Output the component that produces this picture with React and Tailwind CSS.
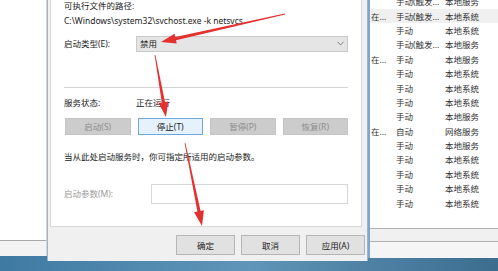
const FONT = "font-['Noto_Sans','Noto_Sans_CJK_SC',sans-serif]";

const ROWS = [
  ["", "手动(触发...", "本地服务"],
  ["在...", "手动(触发...", "本地系统", true],
  ["", "手动", "本地系统"],
  ["", "手动(触发...", "本地服务"],
  ["在...", "手动", "本地服务"],
  ["", "手动", "本地系统"],
  ["", "手动", "本地系统"],
  ["", "手动", "本地系统"],
  ["", "手动", "本地服务"],
  ["在...", "自动", "网络服务"],
  ["", "手动", "本地服务"],
  ["", "手动", "本地系统"],
  ["", "手动", "本地系统"],
  ["", "手动", "本地系统"],
  ["", "手动", "本地系统"],
];

function arrowPoints([tx, ty], [px, py]) {
  const len = Math.hypot(px - tx, py - ty);
  const dx = (px - tx) / len;
  const dy = (py - ty) / len;
  const nx = -dy;
  const ny = dx;
  const L = 15;
  const bx = px - dx * L;
  const by = py - dy * L;
  const pts = [
    [tx + nx * 0.4, ty + ny * 0.4],
    [bx + nx * 1.6, by + ny * 1.6],
    [bx + nx * 5, by + ny * 5],
    [px, py],
    [bx - nx * 5, by - ny * 5],
    [bx - nx * 1.6, by - ny * 1.6],
    [tx - nx * 0.4, ty - ny * 0.4],
  ];
  return pts.map((p) => p.map((v) => v.toFixed(1)).join(",")).join(" ");
}

function ActionButton({ label, active }) {
  return (
    <div
      className={`flex h-[17px] w-[66px] items-center justify-center border ${
        active ? "border-[#6fa8dc] bg-[#e5f1fb] text-[#222]" : "border-[#c4c4c4] bg-[#cccccc] text-[#8c8c8c]"
      }`}
    >
      {label}
    </div>
  );
}

function FooterButton({ label }) {
  return (
    <div className="flex h-[20px] w-[59px] items-center justify-center border border-[#b5b5b5] bg-[#e1e1e1] text-[#222]">
      {label}
    </div>
  );
}

export default function App() {
  return (
    <div className={`relative h-[271px] w-[498px] overflow-hidden bg-gradient-to-r from-[#3f7aa3] via-[#5f95b8] to-[#3c6d8f] text-[8.5px] leading-[11px] ${FONT}`}>
      <div className="flex h-[258px]">
        {/* background window, left */}
        <div className="flex h-[256px] w-[47px] flex-col border-r border-[#d6d6d6] bg-white">
          <div className="flex-1" />
          <div className="h-[16px] border-t border-[#a9a9a9] bg-[#f3f3f3]" />
        </div>

        {/* properties dialog */}
        <div className="flex h-[261px] w-[321px] flex-col border-x border-[#9fb3c6] bg-[#f0f0f0] pl-[2px] pr-[5px]">
          <div className="flex h-[227px] flex-col border-x border-b border-[#d9d9d9] bg-white pl-[13px] pr-[13px] text-[#222]">
            <div className="-mt-[0.5px]">可执行文件的路径:</div>
            <div className="mt-[4px]">C:\Windows\system32\svchost.exe -k netsvcs</div>

            <div className="mt-[10px] flex h-[16px] items-center">
              <div className="w-[72px]">启动类型(E):</div>
              <div className="flex h-[16px] flex-1 items-center justify-between border border-[#c9c9c9] bg-[#e5e5e5] pl-[3px] pr-[3px]">
                <span>禁用</span>
                <svg width="7" height="5" viewBox="0 0 7 5" fill="none" stroke="#777" strokeWidth="0.9">
                  <path d="M0.5 0.8 L3.5 4 L6.5 0.8" />
                </svg>
              </div>
            </div>

            <div className="mt-[35px] h-px bg-[#d4d4d4]" />

            <div className="mt-[9.5px] flex">
              <div className="w-[72px]">服务状态:</div>
              <div>正在运行</div>
            </div>

            <div className="mt-[9.5px] flex gap-[7px] pl-[1px]">
              <ActionButton label="启动(S)" />
              <ActionButton label="停止(T)" active />
              <ActionButton label="暂停(P)" />
              <ActionButton label="恢复(R)" />
            </div>

            <div className="mt-[16.5px]">当从此处启动服务时，你可指定所适用的启动参数。</div>

            <div className="mt-[21.5px] flex h-[20px] items-center">
              <div className="w-[87px] text-[#9a9a9a]">启动参数(M):</div>
              <div className="h-[20px] flex-1 border border-[#d6d6d6] bg-white" />
            </div>
          </div>

          <div className="mt-[8px] flex justify-end gap-[6px] pr-0">
            <FooterButton label="确定" />
            <FooterButton label="取消" />
            <div className="-mr-[3px]">
              <FooterButton label="应用(A)" />
            </div>
          </div>
        </div>

        {/* services list, right */}
        <div className="flex h-[258px] flex-1 flex-col border-l-2 border-[#7ea7cf] bg-white text-[#333]">
          <div className="h-[228px] overflow-hidden">
            <div className="-mt-[5.5px]">
              {ROWS.map(([state, type, account, sel], i) => (
                <div key={i} className={`flex h-[14.4px] items-center pl-[1px] ${sel ? "bg-[#f0f0f0]" : ""}`}>
                  <div className="w-[25px]">{state}</div>
                  <div className="w-[49px]">{type}</div>
                  <div>{account}</div>
                </div>
              ))}
            </div>
          </div>
          <div className="h-[14px] border-y border-[#b0b0b0] bg-[#f0f0f0]" />
          <div className="flex-1 bg-[#f5f5f5]" />
        </div>
      </div>

      {/* red annotation arrows */}
      <svg className="pointer-events-none absolute left-0 top-0" width="498" height="271">
        <polygon points={arrowPoints([285, 14], [161, 42])} fill="#e53030" />
        <polygon points={arrowPoints([155, 55], [166, 117])} fill="#e53030" />
        <polygon points={arrowPoints([185, 143], [202, 226])} fill="#e53030" />
      </svg>
    </div>
  );
}
